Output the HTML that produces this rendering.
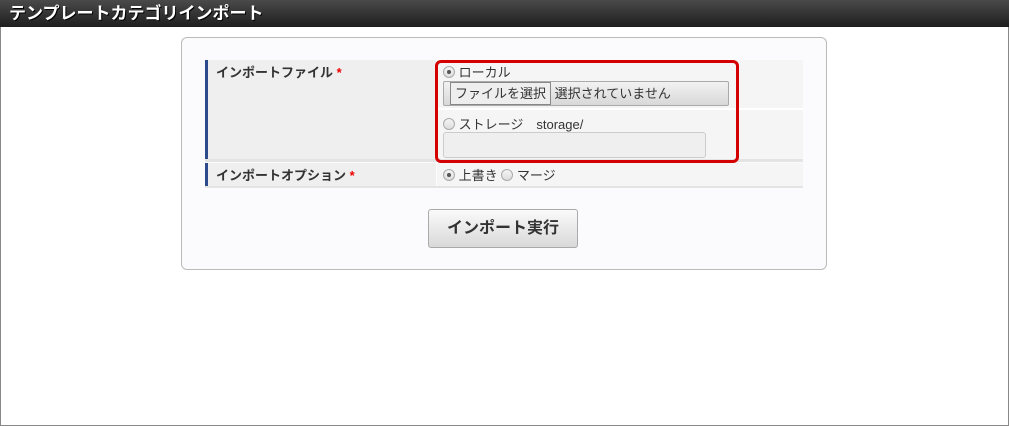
<!DOCTYPE html><html><head><meta charset="utf-8"><style>
*{box-sizing:border-box}body{margin:0;width:1009px;height:426px;overflow:hidden;font-family:"Liberation Sans","Noto Sans CJK JP",sans-serif;font-size:13px;color:#333;background:#fff}
.frame{position:absolute;left:0;top:0;width:1009px;height:426px;border:1px solid #888;border-top:none}
.hd{position:absolute;left:0;top:0;width:1009px;height:27px;background:linear-gradient(#4a4a4a,#1e1e1e);color:#fff;font-weight:bold;font-size:17px;line-height:27px;padding-left:9px;text-shadow:1px 1px 0 #000}
.panel{position:absolute;left:181px;top:37px;width:646px;height:233px;border:1px solid #bbb;border-radius:6px;background:#fbfbfd}
.abs{position:absolute}
.lab{background:#efefef;border-left:3px solid #2c4a8c;font-weight:bold;font-size:13px;padding:2px 0 0 8px}
.val{background:#f5f5f5}
.radio{display:inline-block;width:12px;height:12px;border:1px solid #aaa;border-radius:50%;background:linear-gradient(#f4f4f4,#ddd);vertical-align:-1px;position:relative}
.radio.on::after{content:"";position:absolute;left:3px;top:3px;width:4px;height:4px;border-radius:50%;background:#555}
.req{color:#e00}
</style></head><body>
<div class="frame"></div>
<div class="hd">テンプレートカテゴリインポート</div>
<div class="panel"></div>
<div class="abs lab" style="left:205px;top:60px;width:231px;height:99px">インポートファイル <span class="req">*</span></div>
<div class="abs val" style="left:437px;top:60px;width:366px;height:48px"></div>
<div class="abs" style="left:437px;top:108px;width:366px;height:2px;background:#fff"></div>
<div class="abs val" style="left:437px;top:110px;width:366px;height:49px"></div>
<div class="abs" style="left:205px;top:159px;width:598px;height:3px;background:#e4e4e4"></div>
<div class="abs lab" style="left:205px;top:163px;width:231px;height:23px">インポートオプション <span class="req">*</span></div>
<div class="abs val" style="left:437px;top:163px;width:366px;height:23px"></div>
<div class="abs" style="left:205px;top:186px;width:598px;height:2px;background:#e4e4e4"></div>
<div class="abs" style="left:435px;top:60px;width:304px;height:103px;border:3px solid #d40000;border-radius:6px"></div>
<div class="abs" style="left:443px;top:62px"><span class="radio on"></span> ローカル</div>
<div class="abs" style="left:443px;top:81px;width:286px;height:25px;border:1px solid #aaa;border-radius:2px;background:linear-gradient(#f2f2f2,#d8d8d8);font-size:13px;line-height:23px;white-space:nowrap"><span style="display:inline-block;margin-left:6px;padding:0 4px;border:1px solid #888;background:#eee;line-height:21px;height:23px">ファイルを選択</span> 選択されていません</div>
<div class="abs" style="left:443px;top:114px"><span class="radio"></span> ストレージ　storage/</div>
<div class="abs" style="left:443px;top:132px;width:263px;height:26px;border:1px solid #ccc;border-radius:3px;background:#efefef"></div>
<div class="abs" style="left:443px;top:165px"><span class="radio on"></span> 上書き <span class="radio"></span> マージ</div>
<div class="abs" style="left:428px;top:209px;width:150px;height:39px;border:1px solid #aaa;border-radius:3px;background:linear-gradient(#fafafa,#d9d9d9);font-weight:bold;font-size:16px;text-align:center;line-height:37px">インポート実行</div>
</body></html>
